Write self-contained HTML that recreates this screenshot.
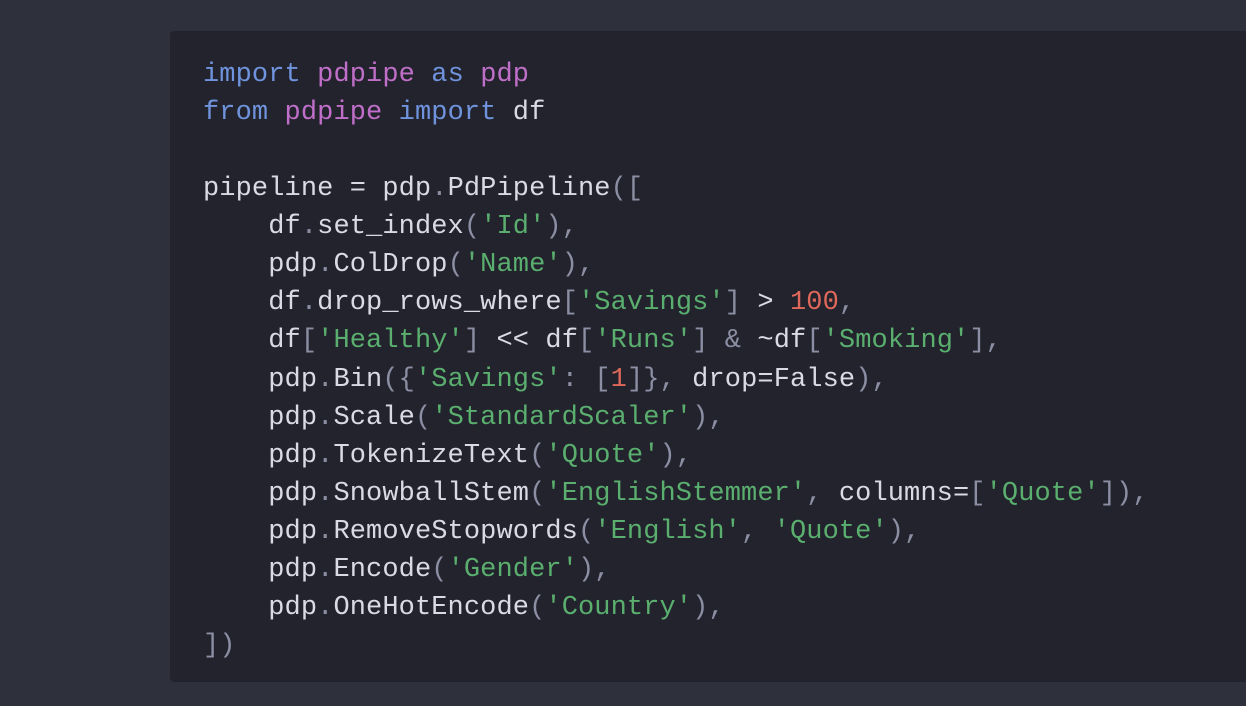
<!DOCTYPE html>
<html><head><meta charset="utf-8"><style>
html,body{margin:0;padding:0;width:1246px;height:706px;overflow:hidden;background:#2e303c;}
.box{position:absolute;left:170px;top:31px;width:1090px;height:651px;background:#22232d;border-radius:4px;}
pre{position:absolute;left:203px;top:56px;margin:0;font-family:"Liberation Mono",monospace;font-size:27px;line-height:38.07px;color:#d9dae3;letter-spacing:0.1px;}
.k{color:#6f93dc}.m{color:#c06fc9}.s{color:#5aae6e}.p{color:#8c8fa3}.n{color:#e0685a}
</style></head><body><div class="box"></div>
<pre><span class="k">import</span> <span class="m">pdpipe</span> <span class="k">as</span> <span class="m">pdp</span>
<span class="k">from</span> <span class="m">pdpipe</span> <span class="k">import</span> df

pipeline = pdp<span class="p">.</span>PdPipeline<span class="p">([</span>
    df<span class="p">.</span>set_index<span class="p">(</span><span class="s">'Id'</span><span class="p">),</span>
    pdp<span class="p">.</span>ColDrop<span class="p">(</span><span class="s">'Name'</span><span class="p">),</span>
    df<span class="p">.</span>drop_rows_where<span class="p">[</span><span class="s">'Savings'</span><span class="p">]</span> &gt; <span class="n">100</span><span class="p">,</span>
    df<span class="p">[</span><span class="s">'Healthy'</span><span class="p">]</span> &lt;&lt; df<span class="p">[</span><span class="s">'Runs'</span><span class="p">]</span> <span class="p">&amp;</span> ~df<span class="p">[</span><span class="s">'Smoking'</span><span class="p">],</span>
    pdp<span class="p">.</span>Bin<span class="p">({</span><span class="s">'Savings'</span><span class="p">:</span> <span class="p">[</span><span class="n">1</span><span class="p">]},</span> drop=False<span class="p">),</span>
    pdp<span class="p">.</span>Scale<span class="p">(</span><span class="s">'StandardScaler'</span><span class="p">),</span>
    pdp<span class="p">.</span>TokenizeText<span class="p">(</span><span class="s">'Quote'</span><span class="p">),</span>
    pdp<span class="p">.</span>SnowballStem<span class="p">(</span><span class="s">'EnglishStemmer'</span><span class="p">,</span> columns=<span class="p">[</span><span class="s">'Quote'</span><span class="p">]),</span>
    pdp<span class="p">.</span>RemoveStopwords<span class="p">(</span><span class="s">'English'</span><span class="p">,</span> <span class="s">'Quote'</span><span class="p">),</span>
    pdp<span class="p">.</span>Encode<span class="p">(</span><span class="s">'Gender'</span><span class="p">),</span>
    pdp<span class="p">.</span>OneHotEncode<span class="p">(</span><span class="s">'Country'</span><span class="p">),</span>
<span class="p">])</span></pre>
</body></html>
